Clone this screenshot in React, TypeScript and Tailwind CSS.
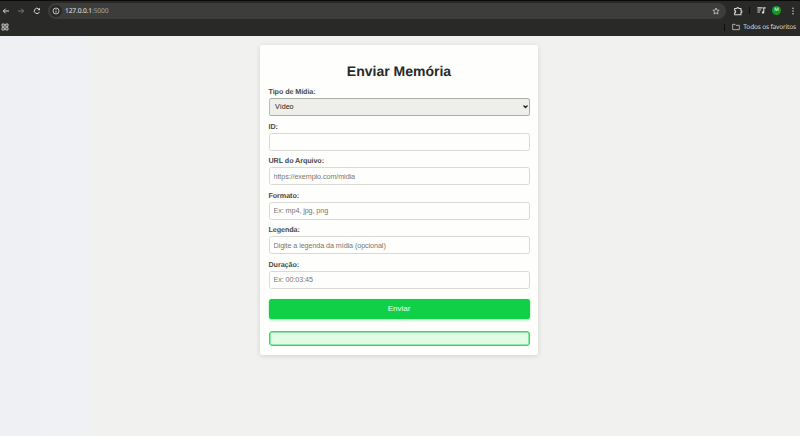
import type { ReactNode } from 'react';

function Icon({ children, className, box = 24 }: { children: ReactNode; className: string; box?: number }) {
  return (
    <svg viewBox={`0 0 ${box} ${box}`} className={`shrink-0 ${className}`} fill="none" stroke="currentColor" strokeWidth="2.6">
      {children}
    </svg>
  );
}

function Toolbar() {
  return (
    <div className="flex h-[19px] items-center text-[#d8d8d5]">
      <Icon className="ml-[2px] size-[8px]">
        <path d="M21 12H4M11 5l-7 7 7 7" strokeWidth="3" />
      </Icon>
      <Icon className="ml-[7px] size-[8px] text-[#777774]">
        <path d="M3 12h17M13 5l7 7-7 7" strokeWidth="3" />
      </Icon>
      <Icon className="ml-[8px] size-[8px]">
        <path d="M19.5 14.500a8 8 0 1 1-2-8.500L20 8.500" strokeWidth="3" />
        <path d="M21 2v8h-8z" fill="currentColor" stroke="none" />
      </Icon>
      <div className="ml-[7px] flex h-[16px] w-[678px] items-center rounded-full bg-[#3d3d3b] pr-[6px] pl-[2px]">
        <span className="flex size-[12px] items-center justify-center rounded-full bg-[#292927]">
          <Icon className="size-[8px]">
            <circle cx="12" cy="12" r="9" />
            <path d="M12 11v6M12 6.500v2.500" />
          </Icon>
        </span>
        <span className="ml-[3px] pt-px text-[6.700px] leading-none tracking-[-0.150px] text-[#e6e6e3]">
          127.0.0.1<span className="text-[#a3a39f]">:5000</span>
        </span>
        <Icon className="ml-auto size-[8px]">
          <path d="M12 3l2.700 6.300 6.800.600-5.200 4.500 1.600 6.700L12 17.500l-5.900 3.600 1.600-6.700-5.200-4.500 6.800-.600z" strokeWidth="2.200" />
        </Icon>
      </div>
      <Icon className="ml-[7px] size-[10px]">
        <path d="M4 6h5a2.500 2.500 0 0 1 5 0h5v5a2.500 2.500 0 0 1 0 5v5H4v-5a2.500 2.500 0 0 0 0-5z" />
      </Icon>
      <span className="ml-[6px] h-[7px] w-px bg-[#0d0d0c]" />
      <Icon className="ml-[7px] size-[9px]">
        <path d="M1 5h14M1 10.500h10M1 16h7M18 17V5h5" strokeWidth="3" />
        <circle cx="16" cy="17" r="3.200" fill="currentColor" stroke="none" />
      </Icon>
      <span className="ml-[6px] flex size-[9px] items-center justify-center rounded-full bg-[#129a28] text-[5px] leading-none text-white">
        M
      </span>
      <Icon className="ml-[8px] size-[8px]">
        <g fill="currentColor" stroke="none">
          <circle cx="12" cy="4" r="2.300" />
          <circle cx="12" cy="12" r="2.300" />
          <circle cx="12" cy="20" r="2.300" />
        </g>
      </Icon>
    </div>
  );
}

function BookmarksBar() {
  return (
    <div className="flex h-[14px] items-center pr-[4px] text-[#d8d8d5]">
      <Icon className="ml-px size-[8px]">
        <path d="M3 3h7v7H3zM14 3h7v7h-7zM3 14h7v7H3zM14 14h7v7h-7z" />
      </Icon>
      <span className="ml-auto h-[7px] w-px bg-[#0d0d0c]" />
      <Icon className="ml-[7px] size-[8px]">
        <path d="M2 4h7l3 3h10v13H2z" strokeWidth="2.200" />
      </Icon>
      <span className="ml-[3px] text-[6.600px] leading-none tracking-[-0.200px] whitespace-nowrap">Todos os favoritos</span>
    </div>
  );
}

const labelClass = 'block h-[11px] text-[7.200px] leading-[10px] tracking-[-0.080px] font-bold text-[#4a4a47]';

function Field({ id, label, placeholder }: { id: string; label: string; placeholder?: string }) {
  return (
    <div className="mb-[5.400px]">
      <label htmlFor={id} className={labelClass}>
        {label}
      </label>
      <input
        id={id}
        placeholder={placeholder}
        className="block h-[18px] w-full rounded-[2.500px] border border-[#d9d9d6] bg-[#fefefc] px-[4px] text-[7.200px] tracking-[-0.080px] text-[#333] outline-none placeholder:text-[#777774]"
      />
    </div>
  );
}

export default function App() {
  return (
    <div className="flex h-[436px] w-[800px] flex-col overflow-hidden bg-[#f1f1ef] [text-rendering:geometricPrecision]">
      <header className="h-[36px] shrink-0 border-t border-[#0c0908] bg-[#292927] font-['Noto_Sans',sans-serif]">
        <Toolbar />
        <BookmarksBar />
      </header>
      <main className="flex flex-1 items-start justify-center bg-[linear-gradient(90deg,#eef0f3_0,#f0f1f3_88px,#f1f1ef_92px)] pt-[8.700px] pr-[2px] font-['Liberation_Sans',Arial,sans-serif]">
        <form className="h-[310.500px] w-[278.500px] rounded-[2px] bg-[#fefefc] px-[8.750px] shadow-[0_1px_5px_rgba(0,0,0,0.13)]">
          <h1 className="pt-[18px] text-center text-[14px] leading-[16px] font-bold text-[#292929]">Enviar Memória</h1>
          <div className="mt-[8.300px] mb-[6px]">
            <label htmlFor="tipo" className={labelClass}>
              Tipo de Mídia:
            </label>
            <div className="grid h-[18px] items-center">
              <select
                id="tipo"
                defaultValue="video"
                className="col-start-1 row-start-1 h-[18px] w-full appearance-none rounded-[2.500px] border border-[#aaaeab] border-l-[#79e5a1] bg-[#eeeeeb] px-[5.500px] pt-px text-[7.200px] tracking-[-0.050px] text-[#222]"
              >
                <option value="video">Vídeo</option>
              </select>
              <Icon className="pointer-events-none col-start-1 row-start-1 mr-[2px] size-[5px] justify-self-end text-[#222]" box={10}>
                <path d="M1 3l4 4 4-4" />
              </Icon>
            </div>
          </div>
          <Field id="id" label="ID:" />
          <Field id="url" label="URL do Arquivo:" placeholder="https://exemplo.com/midia" />
          <Field id="formato" label="Formato:" placeholder="Ex: mp4, jpg, png" />
          <Field id="legenda" label="Legenda:" placeholder="Digite a legenda da mídia (opcional)" />
          <Field id="duracao" label="Duração:" placeholder="Ex: 00:03:45" />
          <button
            type="button"
            className="mt-[10px] block h-[20px] w-full rounded-[2.500px] bg-[#0fd047] text-[8px] text-[#effff2] shadow-[0_1px_3px_rgba(15,208,71,0.4)]"
          >
            Enviar
          </button>
          <div className="mt-[12.500px] h-[15px] rounded-[3px] border border-[#35d768] bg-[#e1fbe5] shadow-[inset_0_0_0_0.500px_#35d768]" />
        </form>
      </main>
    </div>
  );
}
